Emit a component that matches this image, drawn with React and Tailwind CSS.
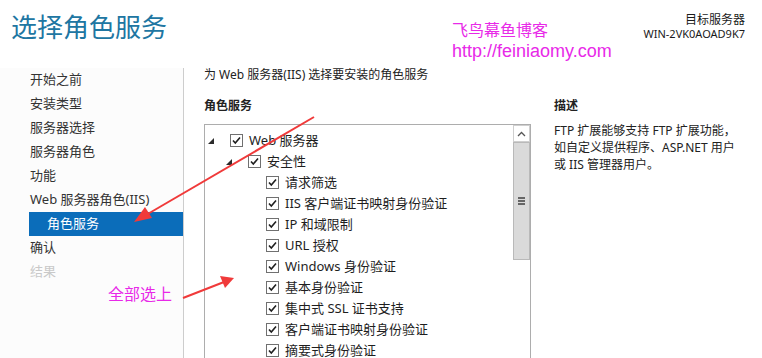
import React from 'react';

const navItems = [
  { label: '开始之前' },
  { label: '安装类型' },
  { label: '服务器选择' },
  { label: '服务器角色' },
  { label: '功能' },
  { label: 'Web 服务器角色(IIS)' },
  { label: '角色服务', active: true },
  { label: '确认' },
  { label: '结果', disabled: true },
];

const treeItems = [
  { label: 'Web 服务器', level: 0, expandable: true },
  { label: '安全性', level: 1, expandable: true },
  { label: '请求筛选', level: 2 },
  { label: 'IIS 客户端证书映射身份验证', level: 2 },
  { label: 'IP 和域限制', level: 2 },
  { label: 'URL 授权', level: 2 },
  { label: 'Windows 身份验证', level: 2 },
  { label: '基本身份验证', level: 2 },
  { label: '集中式 SSL 证书支持', level: 2 },
  { label: '客户端证书映射身份验证', level: 2 },
  { label: '摘要式身份验证', level: 2 },
];

const indent = ['pl-0', 'pl-[18px]', 'pl-[36px]'];

const Checkbox = () => (
  <span className="w-[13px] h-[13px] border border-[#707070] bg-white flex items-center justify-center shrink-0">
    <svg width="11" height="11" viewBox="0 0 11 11">
      <path d="M2 5.5 L4.3 8 L9 2.5" fill="none" stroke="#1f1f1f" strokeWidth="1.6" />
    </svg>
  </span>
);

const TreeRow = ({ item }) => (
  <div className={`flex items-center h-[21px] ${indent[item.level]}`}>
    <span className="w-[24px] h-[21px] flex items-center shrink-0">
      {item.expandable && (
        <svg width="8" height="8" viewBox="0 0 8 8" className="ml-[2px] mt-[3px]">
          <polygon points="6,0 6,6 0,6" fill="#2b2b2b" />
        </svg>
      )}
    </span>
    <Checkbox />
    <span className="ml-[6px] text-[13px] leading-[21px] text-[#1e1e1e] whitespace-nowrap">{item.label}</span>
  </div>
);

export default function App() {
  return (
    <div className="relative w-[762px] h-[358px] overflow-hidden bg-white font-['Noto_Sans','Noto_Sans_CJK_SC',sans-serif] text-[#222]">
      {/* header */}
      <div className="flex justify-between h-[68px]">
        <h1 className="pl-[11px] pt-[11px] text-[26px] leading-[32px] font-normal text-[#2076a2]">选择角色服务</h1>
        <div className="pr-[17px] pt-[13px] text-right text-[#1a1a1a]">
          <div className="text-[12px] leading-[14px]">目标服务器</div>
          <div className="text-[11px] leading-[14px]">WIN-2VK0AOAD9K7</div>
        </div>
      </div>

      {/* body */}
      <div className="flex h-[290px]">
        <div className="w-[184px] shrink-0 border-r border-[#cdcdcd] bg-[#fcfcfc]">
          {navItems.map((n) => (
            <div
              key={n.label}
              className={`ml-[29px] h-6 flex items-center text-[13px] whitespace-nowrap ${
                n.active
                  ? 'bg-[#0b6dba] text-white pl-[18px]'
                  : n.disabled
                  ? 'text-[#c9c9c9] pl-[1px]'
                  : 'text-[#333] pl-[1px]'
              }`}
            >
              {n.label}
            </div>
          ))}
        </div>

        <div className="flex-1 pl-[20px]">
          <div className="text-[12px] leading-[14px] text-[#222]">为 Web 服务器(IIS) 选择要安装的角色服务</div>
          <div className="flex mt-[17px]">
            <div className="w-[327px] shrink-0">
              <div className="text-[12px] leading-[14px] font-bold">角色服务</div>
              <div className="mt-[11px] h-[240px] border border-[#adadad] bg-white flex">
                <div className="flex-1 pt-[5px] pl-[1px]">
                  {treeItems.map((t) => (
                    <TreeRow key={t.label} item={t} />
                  ))}
                </div>
                <div className="w-[17px] flex flex-col">
                  <div className="h-[17px] border border-[#cfcfcf] flex items-center justify-center">
                    <svg width="9" height="6" viewBox="0 0 9 6">
                      <path d="M1 5 L4.5 1.5 L8 5" fill="none" stroke="#555" strokeWidth="1.3" />
                    </svg>
                  </div>
                  <div className="h-[118px] bg-[#dadada] border border-[#b9b9b9] flex flex-col items-center justify-center gap-[1px]">
                    <span className="w-[7px] h-[2px] bg-[#666]" />
                    <span className="w-[7px] h-[2px] bg-[#666]" />
                    <span className="w-[7px] h-[2px] bg-[#666]" />
                  </div>
                </div>
              </div>
            </div>
            <div className="ml-[23px] w-[200px]">
              <div className="text-[12px] leading-[14px] font-bold">描述</div>
              <p className="mt-[9px] text-[12px] leading-[17px] text-[#222]">
                FTP 扩展能够支持 FTP 扩展功能，<br />
                如自定义提供程序、ASP.NET 用户<br />
                或 IIS 管理器用户。
              </p>
            </div>
          </div>
        </div>
      </div>

      {/* annotations */}
      <div className="absolute left-[452px] top-[20px] text-[#e829e8] whitespace-nowrap">
        <div className="text-[16px] leading-[20px]">飞鸟幕鱼博客</div>
        <div className="text-[18px] leading-[22px] font-['Liberation_Sans',sans-serif]">http://feiniaomy.com</div>
      </div>
      <div className="absolute left-[108px] top-[284px] text-[16px] leading-[20px] text-[#e829e8] whitespace-nowrap">全部选上</div>
      <svg className="absolute left-0 top-0 pointer-events-none" width="762" height="358">
        <line x1="314" y1="117" x2="146" y2="215" stroke="#f03a3a" strokeWidth="2" />
        <polygon points="134,222 145,207 152,218" fill="#f03a3a" />
        <line x1="183" y1="298" x2="224" y2="282" stroke="#f03a3a" strokeWidth="2" />
        <polygon points="234,278 220,276 225,288" fill="#f03a3a" />
      </svg>
    </div>
  );
}
